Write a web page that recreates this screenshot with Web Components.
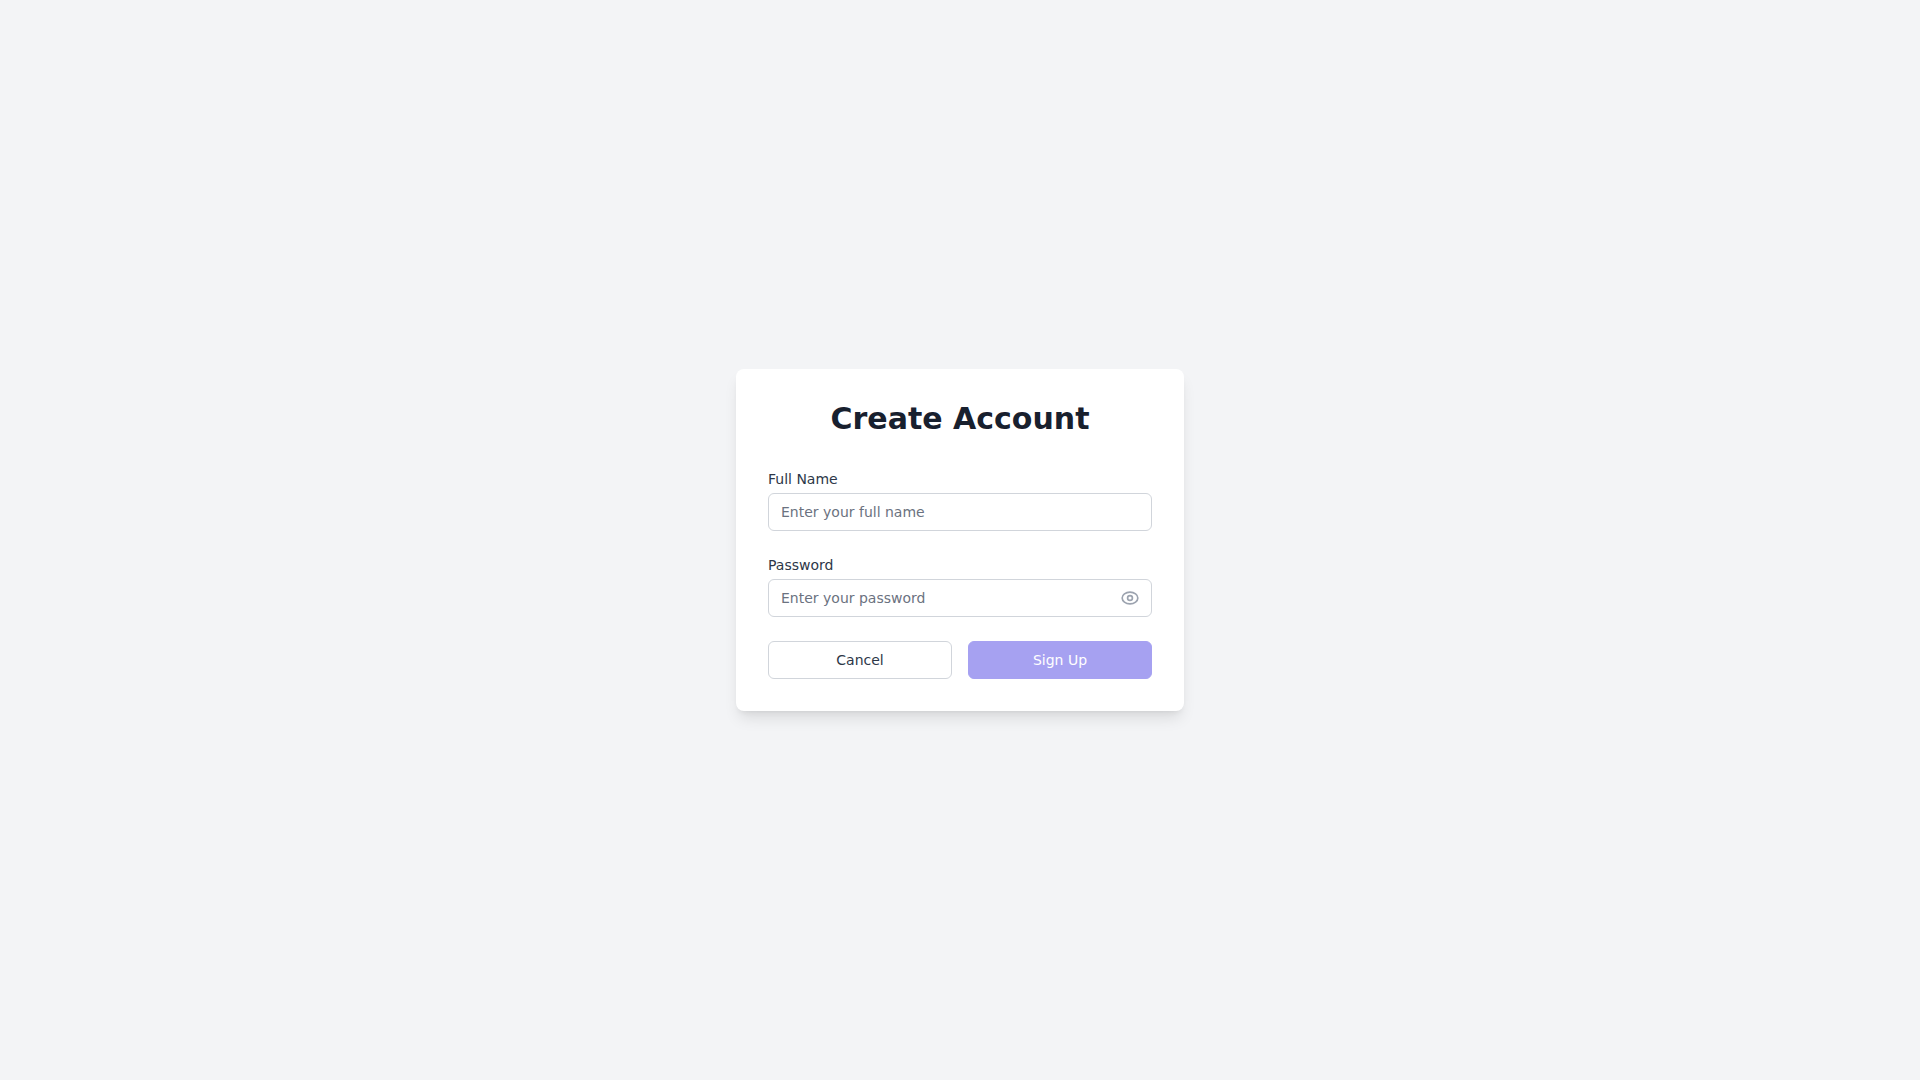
<!DOCTYPE html>
<html lang="en">
<head>
<meta charset="utf-8">
<meta name="viewport" content="width=device-width, initial-scale=1">
<title>Create Account</title>
<style>
  body { margin: 0; font-family: "DejaVu Sans", sans-serif; color: #1f2937; background: #f3f4f6; }
</style>
</head>
<body>
<sign-up-page></sign-up-page>

<template id="page-template">
  <style>
    :host { display: flex; align-items: center; justify-content: center; min-height: 100vh; box-sizing: border-box; background: #f3f4f6; }
    form-card { width: 100%; max-width: 448px; }
    form { display: flex; flex-direction: column; gap: 24px; margin: 0; }
    .actions { display: flex; gap: 16px; }
    .actions > * { flex: 1; }
  </style>
  <form-card>
    <span slot="title">Create Account</span>
    <form>
      <text-field label="Full Name" placeholder="Enter your full name"></text-field>
      <text-field label="Password" placeholder="Enter your password" type="password"></text-field>
      <div class="actions">
        <action-button>Cancel</action-button>
        <action-button variant="primary" disabled>Sign Up</action-button>
      </div>
    </form>
  </form-card>
</template>

<template id="card-template">
  <style>
    :host { display: block; box-sizing: border-box; padding: 32px; background: #fff; border-radius: 8px;
      box-shadow: 0 10px 15px -3px rgba(0,0,0,.1), 0 4px 6px -4px rgba(0,0,0,.1); }
    h1 { margin: 0 0 32px; font-size: 30px; line-height: 36px; font-weight: 700; text-align: center; color: #18202e; }
  </style>
  <h1><slot name="title"></slot></h1>
  <slot></slot>
</template>

<template id="field-template">
  <style>
    :host { display: block; font-size: 14px; line-height: 20px; }
    label { display: block; margin-bottom: 4px; color: #2d3748; }
    .box { display: flex; align-items: center; border: 1px solid #d1d5db; border-radius: 6px; background: #fff; padding: 0 11px 0 12px; }
    .box:focus-within { border-color: #4f46e5; }
    input { flex: 1; min-width: 0; border: 0; outline: 0; margin: 0; padding: 8px 0; height: 20px; font: inherit; color: #111827; background: transparent; }
    input::placeholder { color: #6b7280; opacity: 1; }
    button { display: flex; border: 0; padding: 0; margin: 0; background: none; color: #9ca3af; cursor: pointer; }
    button[hidden] { display: none; }
    svg { display: block; width: 20px; height: 20px; }
  </style>
  <label for="control"></label>
  <div class="box">
    <input id="control">
    <button type="button" aria-label="Show password" hidden>
      <svg viewBox="0 0 24 24" fill="none" stroke="currentColor" stroke-width="2" stroke-linecap="round" stroke-linejoin="round" aria-hidden="true">
        <path d="M2.6 12C2.6 8.2 6.7 5 12 5s9.4 3.2 9.4 7-4.1 7-9.4 7-9.4-3.2-9.4-7z"/>
        <circle cx="12" cy="12" r="2.9"/>
      </svg>
    </button>
  </div>
</template>

<template id="button-template">
  <style>
    :host { display: block; }
    button { display: block; width: 100%; box-sizing: border-box; margin: 0; padding: 8px 16px; border: 1px solid #d1d5db; border-radius: 6px;
      background: #fff; color: #2d3748; font: inherit; font-size: 14px; line-height: 20px; cursor: pointer; }
    :host([variant="primary"]) button { background: #4f46e5; border-color: #4f46e5; color: #fff; }
    button:disabled { opacity: .5; cursor: not-allowed; }
  </style>
  <button type="button"><slot></slot></button>
</template>

<script>
  class TemplateElement extends HTMLElement {
    constructor() {
      super();
      const template = document.getElementById(this.constructor.template);
      this.attachShadow({ mode: "open" }).append(template.content.cloneNode(true));
    }
  }

  class FormCard extends TemplateElement { static template = "card-template"; }

  class TextField extends TemplateElement {
    static template = "field-template";
    connectedCallback() {
      const input = this.shadowRoot.querySelector("input");
      const toggle = this.shadowRoot.querySelector("button");
      this.shadowRoot.querySelector("label").textContent = this.getAttribute("label");
      input.placeholder = this.getAttribute("placeholder") || "";
      input.type = this.getAttribute("type") || "text";
      toggle.hidden = input.type !== "password";
      toggle.onclick = () => {
        const reveal = input.type === "password";
        input.type = reveal ? "text" : "password";
        toggle.setAttribute("aria-label", reveal ? "Hide password" : "Show password");
      };
    }
  }

  class ActionButton extends TemplateElement {
    static template = "button-template";
    connectedCallback() {
      this.shadowRoot.querySelector("button").disabled = this.hasAttribute("disabled");
    }
  }

  class SignUpPage extends TemplateElement { static template = "page-template"; }

  customElements.define("form-card", FormCard);
  customElements.define("text-field", TextField);
  customElements.define("action-button", ActionButton);
  customElements.define("sign-up-page", SignUpPage);
</script>
</body>
</html>
